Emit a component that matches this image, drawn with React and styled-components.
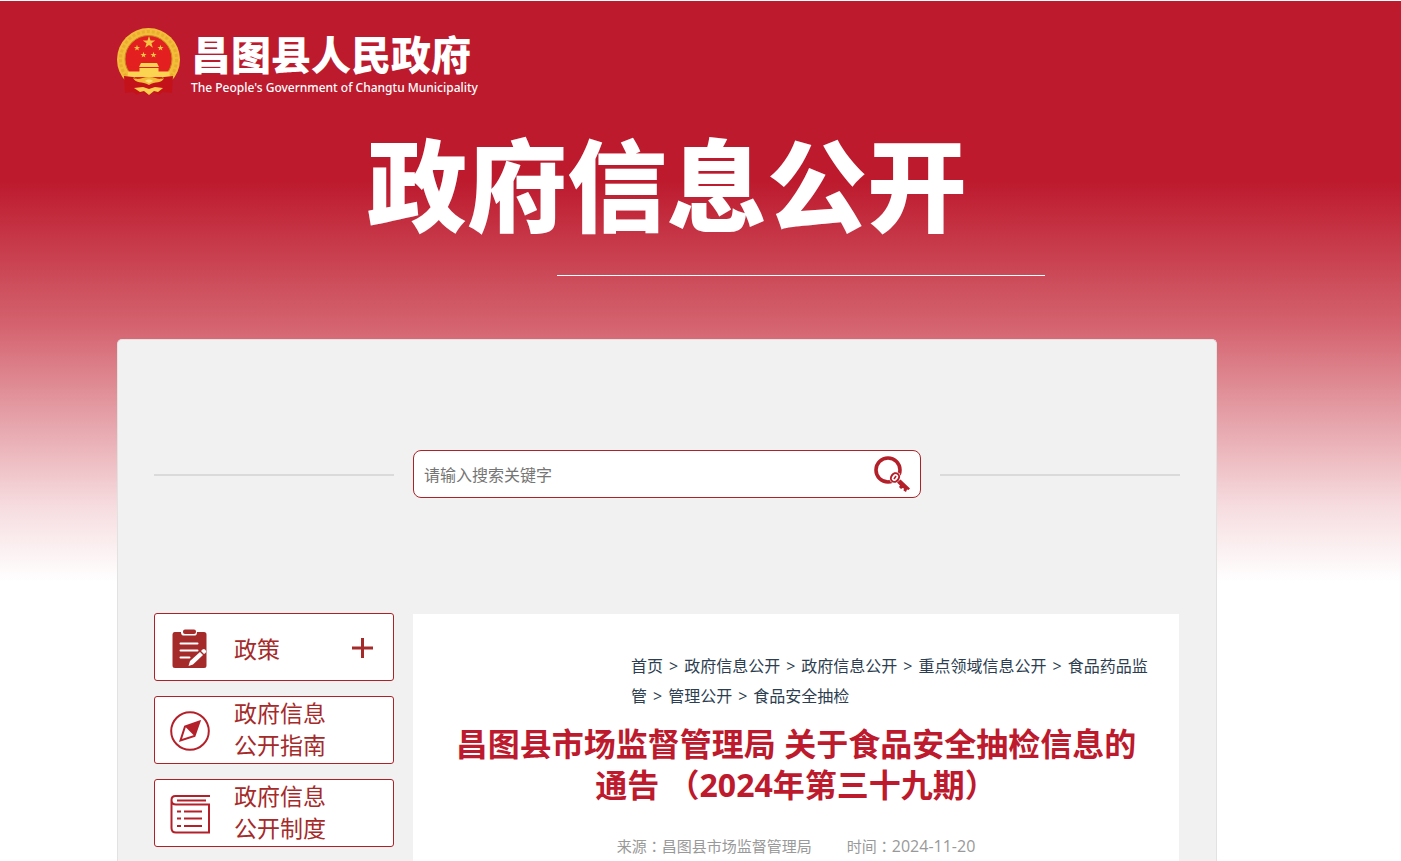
import React from 'react'
import styled, { createGlobalStyle } from 'styled-components'

const GlobalStyle = createGlobalStyle`
  * {
    box-sizing: border-box;
  }
  body {
    margin: 0;
    background: white;
    font-family: "Open Sans", "Noto Sans CJK SC", sans-serif;
    font-size: 16px;
    color: #333;
  }
  h1, h2, p, ul {
    margin: 0;
    padding: 0;
  }
`;

const Page = styled.div`
  border-top: 1px solid white;
  padding-right: 67px;
  background: linear-gradient(#bd1a2d 0, #bd1a2d 180px, #d4636f 325px, #f6dcdf 505px, #ffffff 580px);
`;

const Container = styled.div`
  width: 100%;
  max-width: 1100px;
  margin: 0 auto;
`;

const Brand = styled.a`
  display: flex;
  align-items: flex-start;
  gap: 10px;
  padding-top: 27px;
  height: 100px;
  color: white;
  text-decoration: none;
`;

const BrandText = styled.div`
  display: flex;
  flex-direction: column;
`;

const BrandName = styled.span`
  font-size: 40px;
  line-height: 54px;
  font-weight: 900;
`;

const BrandSub = styled.span`
  font-family: "Noto Sans", sans-serif;
  font-size: 12px;
  line-height: 12px;
  font-weight: 500;
`;

const Title = styled.h1`
  color: white;
  font-size: 100px;
  line-height: 132px;
  font-weight: 900;
  text-align: center;
  padding-top: 18px;
`;

const Rule = styled.div`
  width: 488px;
  height: 1px;
  margin: 24px 0 63px 440px;
  background: white;
`;

const Card = styled.div`
  border: 1px solid #e2e2e2;
  border-bottom: 0;
  border-radius: 5px 5px 0 0;
  background: #f1f1f1;
  padding: 110px 36px 0;
`;

const SearchRow = styled.div`
  display: flex;
  align-items: center;
  gap: 19px;
`;

const Divider = styled.div`
  width: 240px;
  height: 2px;
  margin-top: 2px;
  background: #dadada;
`;

const SearchBox = styled.form`
  display: flex;
  align-items: center;
  flex: 1;
  height: 48px;
  border: 1px solid #ad2227;
  border-radius: 8px;
  background: white;
  padding: 0 10px;
`;

const SearchInput = styled.input`
  flex: 1;
  min-width: 0;
  border: 0;
  padding: 2px 0 0;
  outline: none;
  background: transparent;
  font-family: inherit;
  font-size: 16px;
  &::placeholder {
    color: #757575;
    opacity: 1;
  }
`;

const SearchButton = styled.button`
  border: 0;
  padding: 0;
  background: transparent;
  cursor: pointer;
  svg {
    display: block;
  }
`;

const Columns = styled.div`
  display: flex;
  gap: 19px;
  padding-top: 115px;
`;

const Sidebar = styled.ul`
  display: flex;
  flex-direction: column;
  gap: 15px;
  width: 240px;
  list-style: none;
`;

const MenuLink = styled.a`
  display: flex;
  align-items: center;
  height: 68px;
  border: 1px solid #ad2227;
  border-radius: 3px;
  background: white;
  padding: ${props => props.$single ? '3px' : '2px'} 20px 0 15px;
  color: #a52a2a;
  font-size: 23px;
  line-height: 32px;
  text-decoration: none;
`;

const MenuText = styled.span`
  flex: 1;
  padding: 0 0 ${props => props.$lines > 1 ? '5px' : '0'} 24px;
`;

const Article = styled.article`
  flex: 1;
  margin: 1px 1px 0 0;
  background: white;
  padding: 37px 29px 80px;
`;

const Crumbs = styled.nav`
  margin-left: 189px;
  line-height: 30px;
`;

const Crumb = styled.a`
  color: #2c3e50;
  text-decoration: none;
`;

const Sep = styled.span`
  margin: 0 6px;
  color: #2c3e50;
`;

const ArticleTitle = styled.h2`
  padding: 12px 6px 0;
  color: #bd1a2d;
  font-size: 32px;
  line-height: 41px;
  font-weight: 700;
  text-align: center;
`;

const Meta = styled.p`
  display: flex;
  justify-content: center;
  gap: 35px;
  padding-top: 29px;
  color: #999;
  font-size: 15px;
  line-height: 24px;
`;

const Colon = styled.span`
  font-family: "Noto Sans CJK TC", sans-serif;
`;

const DateText = styled.time`
  font-size: 16px;
`;

function Star({ x, y, r }) {
  const points = []
  for (let i = 0; i < 10; i++) {
    const a = (Math.PI / 5) * i - Math.PI / 2
    const d = i % 2 ? r * 0.4 : r
    points.push(`${x + d * Math.cos(a)},${y + d * Math.sin(a)}`)
  }
  return <polygon points={points.join(' ')} fill="#f6c443" />
}

function Emblem() {
  return (
    <svg width="64" height="68" viewBox="0 0 64 68" aria-hidden="true">
      <circle cx="31.500" cy="31.500" r="31.500" fill="#f3bd3a" />
      <circle cx="31.500" cy="31.500" r="28" fill="none" stroke="#e9ad30" strokeWidth="3" strokeDasharray="3 2" />
      <circle cx="31.500" cy="31" r="23.500" fill="#e3201f" stroke="#c98a24" />
      <Star x={32} y={14.5} r={6.5} />
      <Star x={20} y={20} r={3.2} />
      <Star x={43.5} y={20} r={3.2} />
      <Star x={26.5} y={27} r={3.2} />
      <Star x={36.5} y={27} r={3.2} />
      <path d="M24 35h16l2 4H22zM22.500 40h19v3.500h11v5.500H11v-5.500h11.500z" fill="#fbd552" />
      <path d="M7 48l9 1 8 5h15l8-5 9-1-1 17-9-1-4 3-6-3-5 3-5-3-6 3-4-3-8 1z" fill="#c4121b" />
      <path d="M16 50c6 3 9-1 16-1s10 4 15 1c-2 6-9 3-15 7-7-4-13-1-16-7z" fill="#f3bd3a" />
      <path d="M17 60l9-1 6 2 6-2 8 1-5 4-4-1-5 4-5-4-4 1z" fill="#f9cf4d" />
      <path d="M28 53c2-2 6-2 8 0l-4 2z" fill="#fbe07a" />
    </svg>
  )
}

function SearchIcon() {
  return (
    <svg width="36" height="36" viewBox="0 0 36 36" aria-hidden="true">
      <circle cx="14" cy="14" r="12" fill="none" stroke="#b4202a" strokeWidth="3.600" />
      <circle cx="21" cy="21.500" r="6" fill="white" />
      <ellipse cx="21" cy="21.500" rx="3.800" ry="4.600" transform="rotate(35 21 21.5)" fill="none" stroke="#b4202a" strokeWidth="2" />
      <path d="M20 23l2-3" stroke="#b4202a" strokeWidth="1.600" />
      <path d="M23 26.500l3.500-3L36 32.500l-1.500 1.500-1.500-.5-1 2.500-2.500-1.500.5-2-1.500-.5-1.500 1-2-2 1-1.500z" fill="#b4202a" />
    </svg>
  )
}

function PolicyIcon() {
  return (
    <svg width="40" height="40" viewBox="0 0 40 40" aria-hidden="true">
      <path d="M4.500 3h6.500c0 3 1.500 3.500 3 3.500h10c2 0 3-.5 3-3.500h7q2.500 0 2.500 2.500v31q0 2.500-2.500 2.500H5q-2.500 0-2.500-2.500v-31Q2.500 3 4.500 3z" fill="#a52a2a" />
      <rect x="13" y="0.500" width="13" height="4.500" rx="2" fill="#a52a2a" />
      <path d="M10.500 14.500h17M10.500 21.500h17M10.500 28.500h9" stroke="white" strokeWidth="2" strokeLinecap="round" />
      <path d="M18.500 37l1.500-5L30 23l3 3L23 35.500z" fill="white" />
      <path d="M31 22l1.500-1.500q1.500-1 3 .5t0 3L34 25z" fill="white" />
    </svg>
  )
}

function CompassIcon() {
  return (
    <svg width="40" height="40" viewBox="0 0 40 40" aria-hidden="true">
      <circle cx="20" cy="20" r="18.800" fill="none" stroke="#b4202a" strokeWidth="2" />
      <path d="M29.500 10.500L15 15.500 10.500 29.500l14-4.500z" fill="none" stroke="#b4202a" strokeWidth="2" />
      <path d="M29.500 10.500L15 15.500l9.500 9.500z" fill="#b4202a" />
    </svg>
  )
}

function RulesIcon() {
  return (
    <svg width="40" height="40" viewBox="0 0 40 40" fill="none" stroke="#b4202a" strokeWidth="2" aria-hidden="true">
      <path d="M40 2H5.500Q1.500 2 1.500 6v28q0 4.500 4.500 4.500h33V10.500H6Q1.500 10.500 1.500 6" />
      <path d="M7 6.500h29M14 17.500h18M14 24.500h18M14 32h18M7 17.500h4M7 24.500h4M7 32h4" />
    </svg>
  )
}

function PlusIcon() {
  return (
    <svg width="22" height="22" viewBox="0 0 22 22" aria-hidden="true">
      <path d="M11.500 0v20M1 10h21" stroke="#a52a2a" strokeWidth="3" />
    </svg>
  )
}

const crumbs = ['首页', '政府信息公开', '政府信息公开', '重点领域信息公开', '食品药品监管', '管理公开', '食品安全抽检']

function App() {
  return (
    <Page>
      <GlobalStyle />
      <Container>
        <Brand href="#">
          <Emblem />
          <BrandText>
            <BrandName>昌图县人民政府</BrandName>
            <BrandSub>The People's Government of Changtu Municipality</BrandSub>
          </BrandText>
        </Brand>
        <Title>政府信息公开</Title>
        <Rule />
        <Card>
          <SearchRow>
            <Divider />
            <SearchBox>
              <SearchInput type="text" aria-label="搜索" placeholder="请输入搜索关键字" />
              <SearchButton type="button" aria-label="搜索"><SearchIcon /></SearchButton>
            </SearchBox>
            <Divider />
          </SearchRow>
          <Columns>
            <Sidebar>
              <li>
                <MenuLink href="#" $single><PolicyIcon /><MenuText>政策</MenuText><PlusIcon /></MenuLink>
              </li>
              <li>
                <MenuLink href="#"><CompassIcon /><MenuText $lines={2}>政府信息<br />公开指南</MenuText></MenuLink>
              </li>
              <li>
                <MenuLink href="#"><RulesIcon /><MenuText $lines={2}>政府信息<br />公开制度</MenuText></MenuLink>
              </li>
            </Sidebar>
            <Article>
              <Crumbs>
                {crumbs.map((name, i) => (
                  <React.Fragment key={i}>
                    {i > 0 && <Sep>&gt;</Sep>}
                    <Crumb href="#">{name}</Crumb>
                  </React.Fragment>
                ))}
              </Crumbs>
              <ArticleTitle>昌图县市场监督管理局 关于食品安全抽检信息的通告 （2024年第三十九期）</ArticleTitle>
              <Meta>
                <span>来源<Colon>：</Colon>昌图县市场监督管理局</span>
                <span>时间<Colon>：</Colon><DateText>2024-11-20</DateText></span>
              </Meta>
            </Article>
          </Columns>
        </Card>
      </Container>
    </Page>
  )
}

export default App
